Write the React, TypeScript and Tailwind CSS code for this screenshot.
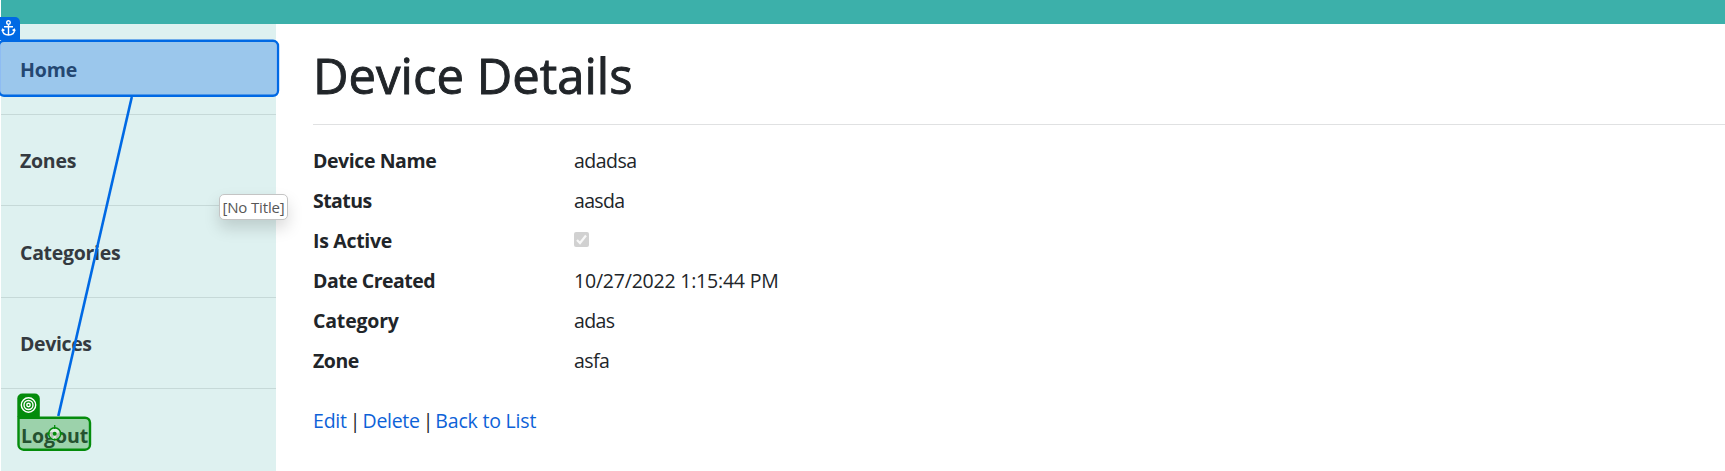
const navItems = [
  { label: 'Home', style: 'h-[91px] leading-[92px] tracking-[-0.15px]' },
  { label: 'Zones', style: 'h-[91px] leading-[92px] tracking-[-0.25px]' },
  { label: 'Categories', style: 'h-[92px] leading-[94px] tracking-[-0.3px]' },
  { label: 'Devices', style: 'h-[91px] leading-[92px] tracking-[-0.37px]' },
];

const details = [
  { label: 'Device Name', value: 'adadsa', labelStyle: 'tracking-[-0.42px]', valueStyle: 'tracking-[-0.5px]' },
  { label: 'Status', value: 'aasda', labelStyle: 'tracking-[-0.55px]', valueStyle: 'tracking-[-0.65px]' },
  { label: 'Is Active', value: null, labelStyle: 'tracking-[-0.3px]', valueStyle: '' },
  { label: 'Date Created', value: '10/27/2022 1:15:44 PM', labelStyle: 'tracking-[-0.5px]', valueStyle: 'tracking-[-0.21px]' },
  { label: 'Category', value: 'adas', labelStyle: 'tracking-[-0.18px]', valueStyle: 'tracking-[-0.65px]' },
  { label: 'Zone', value: 'asfa', labelStyle: 'tracking-[-0.45px]', valueStyle: 'tracking-[-0.6px]' },
];

function CheckedBox() {
  return (
    <svg className="mt-[11px] block size-[15px]" viewBox="0 0 15 15" role="img" aria-label="Active">
      <rect width="15" height="15" rx="2" fill="#d1d1d1" />
      <path d="M3 8l3 3 6-7.5" fill="none" stroke="#f7f7f7" strokeWidth="2.2" />
    </svg>
  );
}

function FlowOverlay() {
  return (
    <svg className="pointer-events-none absolute top-0 left-0" width="300" height="471" viewBox="0 0 300 471">
      <rect x="-1" y="40.8" width="279" height="55" rx="5" fill="#0066e6" fillOpacity="0.3" stroke="#0069e4" strokeWidth="2.4" />
      <path d="M0 17h15a5 5 0 0 1 5 5v18H0z" fill="#0069e4" />
      <g fill="none" stroke="#fff" strokeWidth="1.4">
        <circle cx="8.5" cy="22.6" r="1.8" />
        <path d="M8.5 24.4V35M4 26.7h9M2.5 29.5c0 3.5 2.5 5.500 6 5.500s6-2 6-5.500M2 31.300l.6-2 1.900 1M15 31.300l-.6-2-1.900 1" />
      </g>
      <path d="M131.800 97L58.300 416" stroke="#0069e4" strokeWidth="2.600" />
      <path d="M17.300 417v-18.500a5 5 0 0 1 5-5h12.500a5 5 0 0 1 5 5v18.500z" fill="#048c0c" />
      <path d="M18.500 417.700H85a5 5 0 0 1 5 5v22a5 5 0 0 1-5 5H23.500a5 5 0 0 1-5-5z" fill="#048c0c" fillOpacity="0.3" stroke="#048c0c" strokeWidth="2.400" />
      <g fill="none" stroke="#fff" strokeWidth="1.400">
        <circle cx="28.500" cy="405" r="7.200" />
        <circle cx="28.500" cy="405" r="4.500" />
        <circle cx="28.500" cy="405" r="1.700" />
      </g>
      <circle cx="54.700" cy="433.700" r="6" fill="#fff" fillOpacity="0.65" stroke="#048c0c" strokeWidth="1.600" />
      <circle cx="54.700" cy="433.700" r="2" fill="#048c0c" />
      <path d="M54.700 425v4M54.700 438.500v2M46.500 433.700h3M60 433.700h3" stroke="#048c0c" strokeWidth="1.300" />
    </svg>
  );
}

export default function App() {
  return (
    <div className="relative flex h-[471px] flex-col overflow-hidden bg-white font-['Open_Sans','Noto_Sans',sans-serif] text-[19.5px] text-[#212529]">
      <header className="ml-px h-6 shrink-0 bg-[#3cb0aa]" />
      <div className="flex min-h-0 flex-1">
        <nav className="ml-px w-[275px] shrink-0 bg-[#def1f0] font-bold text-[#343a40]">
          {navItems.map((item) => (
            <div key={item.label} className={`border-b border-[#c6d9d8] pl-[19px] ${item.style}`}>
              {item.label}
            </div>
          ))}
          <div className="pl-[20px] leading-[94px] tracking-[-0.05px]">Logout</div>
        </nav>
        <main className="min-w-0 flex-1 pl-[37px]">
          <h1 className="h-[100px] text-[49px] leading-[103px] font-medium [-webkit-text-stroke:0.9px_#212529]">
            Device Details
          </h1>
          <hr className="mb-4 border-t border-[#e0e1e2]" />
          <dl>
            {details.map((row) => (
              <div key={row.label} className="flex h-10 leading-10">
                <dt className={`w-[261px] shrink-0 font-bold ${row.labelStyle}`}>{row.label}</dt>
                <dd className={row.valueStyle}>{row.value ?? <CheckedBox />}</dd>
              </div>
            ))}
          </dl>
          <div className="mt-5 flex leading-10">
            <a className="text-[#0d62d8] tracking-[-0.2px]">Edit</a>
            <span className="mr-[2px] ml-[3px]">|</span>
            <a className="text-[#0d62d8] tracking-[-0.3px]">Delete</a>
            <span className="mr-[2px] ml-[3px]">|</span>
            <a className="text-[#0d62d8] tracking-[-0.2px]">Back to List</a>
          </div>
        </main>
      </div>
      <FlowOverlay />
      <div className="absolute top-[194px] left-[219px] flex h-[26px] w-[69px] items-center justify-center rounded-[5px] border border-[#c4c4c4] bg-white text-[15px] tracking-[-0.15px] whitespace-nowrap text-[#575757] shadow-[0_8px_16px_rgba(0,0,0,0.15)]">
        [No Title]
      </div>
    </div>
  );
}
